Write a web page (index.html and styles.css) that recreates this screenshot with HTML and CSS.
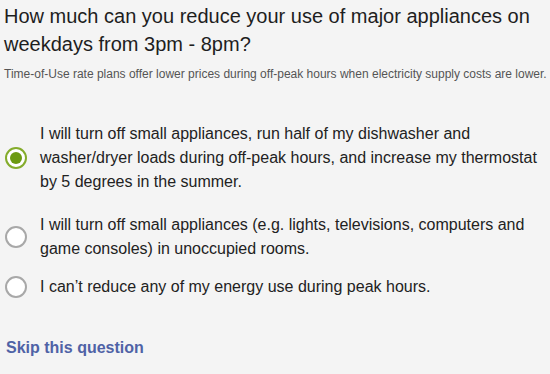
FILE: index.html
```html
<!DOCTYPE html>
<html lang="en">
<head>
  <meta charset="UTF-8">
  <title>Peak hours question</title>
  <meta name="viewport" content="width=device-width, initial-scale=1.0">
  <link rel="stylesheet" href="styles.css">
</head>
<body>
  <!-- Question -->
  <div class="question">
    <h1>How much can you reduce your use of major appliances on weekdays from 3pm - 8pm?</h1>
    <p class="hint">Time-of-Use rate plans offer lower prices during off-peak hours when electricity supply costs are lower.</p>

    <!-- Answers -->
    <div class="options">
      <label class="option checked">
        <span class="radio"></span>
        <span class="option-text">I will turn off small appliances, run half of my dishwasher and washer/dryer loads during off-peak hours, and increase my thermostat by 5 degrees in the summer.</span>
      </label>
      <label class="option">
        <span class="radio"></span>
        <span class="option-text">I will turn off small appliances (e.g. lights, televisions, computers and game consoles) in unoccupied rooms.</span>
      </label>
      <label class="option">
        <span class="radio"></span>
        <span class="option-text">I can&rsquo;t reduce any of my energy use during peak hours.</span>
      </label>
    </div>

    <a href="#" class="skip">Skip this question</a>
  </div>
</body>
</html>
```

FILE: styles.css
```css
/* ===== Base ===== */
* {
  margin: 0;
  padding: 0;
  box-sizing: border-box;
}
body {
  background: #f4f4f4;
  color: #222;
  font-family: "Liberation Sans", Arial, sans-serif;
  padding: 2px 3px 0 4px;
}

/* ===== Question ===== */
.question h1 {
  font-size: 20px;
  font-weight: normal;
  line-height: 28px;
  color: #1e1e1e;
}
.question .hint {
  margin-top: 8px;
  font-size: 12px;
  line-height: 16px;
  color: #555;
}

/* ===== Options ===== */
.options {
  margin-top: 40px;
  display: flex;
  flex-direction: column;
  gap: 14px;
}
.option {
  display: flex;
  align-items: center;
  gap: 13px;
  cursor: pointer;
}
.option.checked {
  margin-bottom: 5px;
}
.option-text {
  font-size: 16px;
  line-height: 24px;
  color: #222;
  padding-right: 6px;
}
.radio {
  flex: 0 0 22px;
  width: 22px;
  height: 22px;
  margin-left: 1px;
  border-radius: 50%;
  border: 2px solid #a8a8a8;
  background: #fff;
  display: flex;
  align-items: center;
  justify-content: center;
}
.option.checked .radio {
  border: 2px solid #84ac2c;
}
.option.checked .radio::after {
  content: "";
  width: 12px;
  height: 12px;
  border-radius: 50%;
  background: #6c9a12;
}

/* ===== Skip link ===== */
.skip {
  display: inline-block;
  margin-top: 39px;
  margin-left: 2px;
  font-size: 16px;
  line-height: 20px;
  font-weight: bold;
  color: #4f62a6;
  text-decoration: none;
}
```
